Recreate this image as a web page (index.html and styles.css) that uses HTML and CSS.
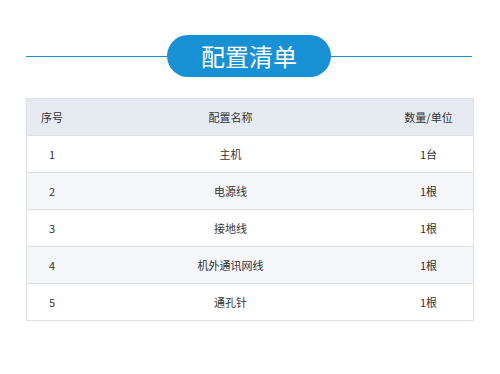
FILE: index.html
```html
<!DOCTYPE html>
<html lang="zh">
<head>
<meta charset="utf-8">
<link rel="stylesheet" href="styles.css">
</head>
<body>
<div class="page">
  <div class="title-row">
    <div class="line"></div>
    <div class="pill">配置清单</div>
    <div class="line"></div>
  </div>
  <table class="list">
    <thead>
      <tr><th class="c1">序号</th><th class="c2">配置名称</th><th class="c3">数量/单位</th></tr>
    </thead>
    <tbody>
      <tr><td>1</td><td>主机</td><td>1台</td></tr>
      <tr><td>2</td><td>电源线</td><td>1根</td></tr>
      <tr><td>3</td><td>接地线</td><td>1根</td></tr>
      <tr><td>4</td><td>机外通讯网线</td><td>1根</td></tr>
      <tr><td>5</td><td>通孔针</td><td>1根</td></tr>
    </tbody>
  </table>
</div>
</body>
</html>
```
FILE: styles.css
```css
html, body {
  margin: 0;
  padding: 0;
  background: #fff;
}
body {
  font-family: "Noto Sans CJK SC", "Noto Sans", sans-serif;
  color: #333;
}
.page {
  width: 446px;
  margin-left: 26px;
  padding-top: 35px;
}
.title-row {
  display: flex;
  align-items: center;
  height: 42px;
}
.line {
  flex: 1;
  height: 1px;
  background: #1a8fd4;
}
.pill {
  width: 164px;
  height: 42px;
  border-radius: 21px;
  background: #1890d4;
  color: #fff;
  font-size: 24px;
  line-height: 42px;
  text-align: center;
  letter-spacing: 0;
}
.list {
  margin-top: 21px;
  width: 446px;
  border-collapse: collapse;
  border: 1px solid #dcdfe6;
  font-size: 11px;
  table-layout: fixed;
}
.list th, .list td {
  height: 36px;
  padding: 0;
  text-align: center;
  font-weight: normal;
  border-top: 1px solid #dcdfe6;
  color: #333;
}
.list thead tr {
  background: #e6ebf2;
}
.list tbody tr:nth-child(even) {
  background: #f4f6f9;
}
.c1 { width: 50px; }
.c2 { width: 307px; }
.c3 { width: 89px; }
```
